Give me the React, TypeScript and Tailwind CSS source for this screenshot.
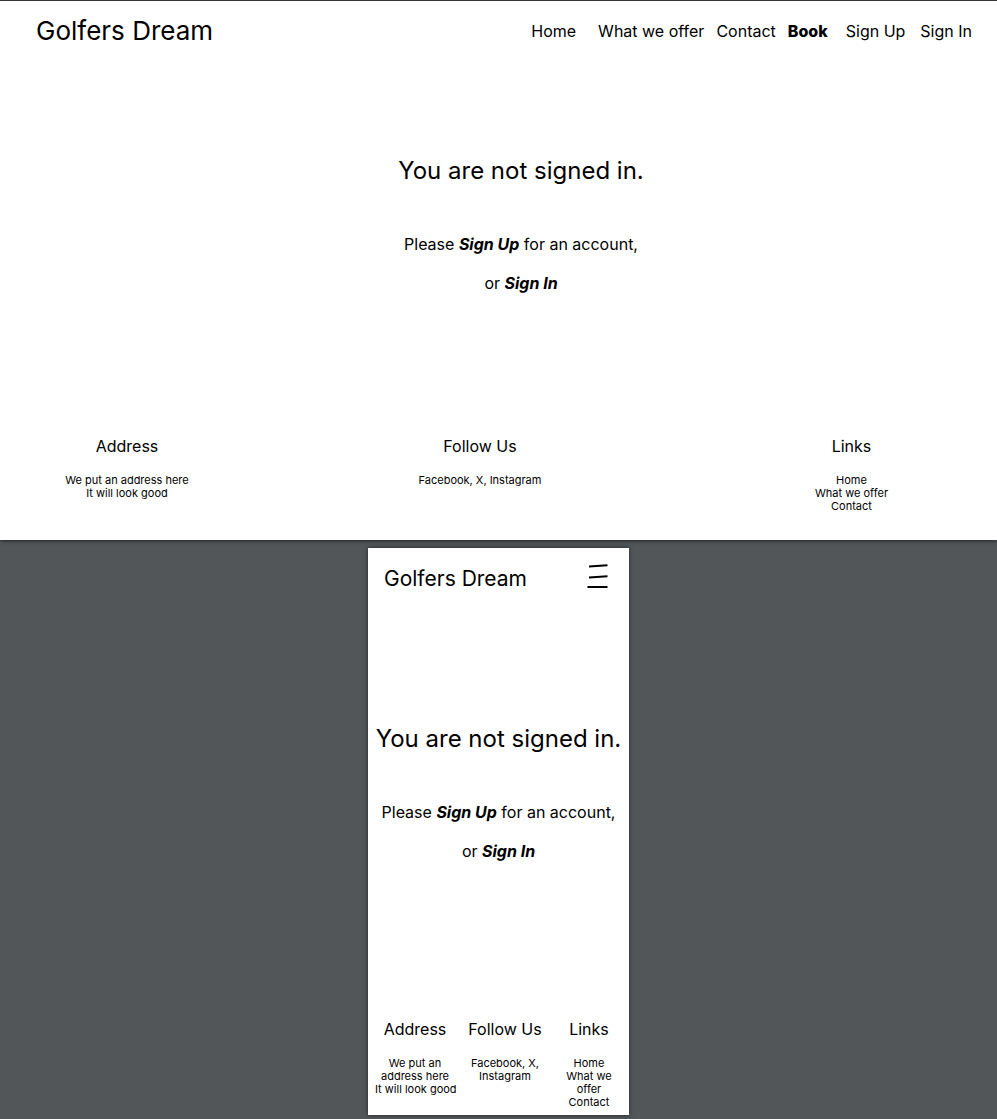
import React from "react";

const navLinks = [
  { label: "Home", gap: "mr-[22px]" },
  { label: "What we offer", gap: "mr-3" },
  { label: "Contact", gap: "mr-3" },
  { label: "Book", gap: "mr-[18px]", active: true },
  { label: "Sign Up", gap: "mr-[15px]" },
  { label: "Sign In", gap: "" },
];

function Message() {
  return (
    <main className="flex flex-col items-center text-center whitespace-nowrap">
      <h2 className="text-2xl leading-8">You are not signed in.</h2>
      <p className="mt-[38px] text-base leading-[39px]">
        Please <a href="#signup" className="font-bold italic">Sign Up</a> for an account,
        <br />
        or <a href="#signin" className="font-bold italic">Sign In</a>
      </p>
    </main>
  );
}

function FooterColumn({ title, className, children }: { title: string; className?: string; children: React.ReactNode }) {
  return (
    <section className={className}>
      <h3 className="text-base leading-5 whitespace-nowrap">{title}</h3>
      <div className="mt-[18px] text-[11px] leading-[13px]">{children}</div>
    </section>
  );
}

function DesktopPage() {
  return (
    <div className="flex h-[540px] flex-col border-t border-[#323639] bg-white shadow-[0_1px_4px_rgba(0,0,0,0.6)]">
      <header className="flex items-center justify-between pt-3 pr-[25px] pl-9">
        <h1 className="text-[26px] leading-9">Golfers Dream</h1>
        <nav className="flex text-base leading-5">
          {navLinks.map((link) => (
            <a key={link.label} href="#" className={`${link.gap} ${link.active ? "font-extrabold" : ""}`}>
              {link.label}
            </a>
          ))}
        </nav>
      </header>
      <div className="mt-[106px] pl-[45px]">
        <Message />
      </div>
      <footer className="mt-auto grid grid-cols-[254fr_452fr_291fr] pb-[27px] text-center">
        <FooterColumn title="Address">
          We put an address here
          <br />
          It will look good
        </FooterColumn>
        <FooterColumn title="Follow Us">Facebook, X, Instagram</FooterColumn>
        <FooterColumn title="Links">
          <a href="#" className="block">Home</a>
          <a href="#" className="block">What we offer</a>
          <a href="#" className="block">Contact</a>
        </FooterColumn>
      </footer>
    </div>
  );
}

function MobilePage() {
  return (
    <div className="mx-auto mt-2 flex h-[567px] w-[261px] flex-col bg-white shadow-[0_0_4px_rgba(0,0,0,0.6)]">
      <header className="flex items-start justify-between pt-4 pr-5 pl-4">
        <h1 className="text-[21px] leading-[30px]">Golfers Dream</h1>
        <button type="button" aria-label="Open menu">
          <svg width="22" height="26" viewBox="0 0 22 26" fill="none" stroke="black" strokeWidth="2">
            <path d="M2 2.5 L20.5 1.2 M2 13.5 L20.5 12.2 M0.5 23 H20.5" />
          </svg>
        </button>
      </header>
      <div className="mt-[129px]">
        <Message />
      </div>
      <footer className="mt-auto flex pr-3 pb-[6px] pl-[7px] text-center">
        <FooterColumn title="Address" className="w-20">
          We put an address here
          <br />
          <span className="whitespace-nowrap">It will look good</span>
        </FooterColumn>
        <FooterColumn title="Follow Us" className="ml-3 w-[76px]">Facebook, X, Instagram</FooterColumn>
        <FooterColumn title="Links" className="ml-auto w-14">
          <a href="#" className="block">Home</a>
          <a href="#" className="block">What we offer</a>
          <a href="#" className="block">Contact</a>
        </FooterColumn>
      </footer>
    </div>
  );
}

export default function App() {
  return (
    <div className="min-h-screen bg-[#525659] pb-1 font-['Inter',sans-serif] text-black">
      <DesktopPage />
      <MobilePage />
    </div>
  );
}
